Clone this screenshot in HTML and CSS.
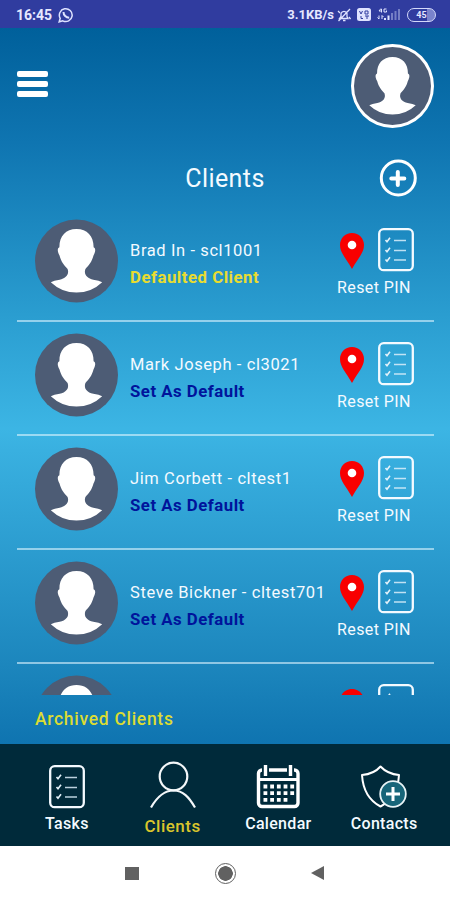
FILE: index.html
```html
<!DOCTYPE html>
<html>
	<head>
		<meta charset="utf-8" />
		<title>Clients</title>
		<link rel="stylesheet" href="styles.css">
	</head>
	<body>
		<svg class="defs" width="0" height="0">
			<symbol id="person" viewBox="0 0 84 84">
				<circle cx="42" cy="42" r="42" fill="#4d5c75"/>
				<path fill="#fff" d="M42 9.500C31 9.500 24.500 17 24.700 28C22.500 29 22.500 32 24.800 36.500C26.500 43 29.500 46.500 33 50C35 56 31 59.500 25 61Q19 62 16 63.500Q27 74 42 74Q57 74 68 63.500Q65 62 59 61C53 59.500 49 56 51 50C54.500 46.500 57.500 43 59.200 36.500C61.500 32 61.500 29 59.300 28C59.500 17 53 9.500 42 9.500Z"/>
			</symbol>
			<symbol id="pin" viewBox="0 0 24 36">
				<path fill="#f80000" d="M12 0C5 0 0 5.500 0 12C0 20 6 25 12 36C18 25 24 20 24 12C24 5.500 19 0 12 0Z"/>
				<circle cx="12" cy="12" r="4.300" fill="#fff"/>
			</symbol>
			<symbol id="tasks" viewBox="0 0 36 44">
				<rect x="1.200" y="1.200" width="33.600" height="41" rx="4.500" fill="none" stroke="#f4faff" stroke-width="2.300"/>
				<path fill="none" stroke="#e4f2fa" stroke-width="1.600" d="M7.500 12l1.500 1.800L12 9.800M7.500 22l1.500 1.800L12 19.800M7.500 31.500l1.500 1.800L12 29.300"/>
				<path fill="none" stroke="#dceefa" stroke-opacity=".85" stroke-width="1.600" d="M16 12.500h12M16 22.500h12M16 32h12"/>
			</symbol>
		</svg>

		<div class="status">
			<span class="time">16:45</span>
			<svg class="whatsapp" viewBox="0 0 16 16" width="16" height="16">
				<path fill="none" stroke="#dfe3ff" stroke-width="1.500" d="M1.200 14.800l1-3.500A6.400 6.400 0 1 1 4.800 13.800Z"/>
				<path fill="none" stroke="#dfe3ff" stroke-width="2" d="M5.500 5C5.500 8 8 10.700 11.200 10.700"/>
			</svg>
			<span class="speed">3.1KB/s</span>
			<svg class="mute" viewBox="0 0 14 14" width="14" height="14" fill="none" stroke="#dfe3ff" stroke-width="1.300">
				<path d="M2.500 10.500H11L10 8.500V5.500A3.200 3.200 0 0 0 4 5.500V8.500ZM6 12.500h2.500M13 1L1.500 13M1 3l2 2M12 9l1.500 2"/>
			</svg>
			<svg class="volte" viewBox="0 0 14 13" width="14" height="13">
				<rect width="14" height="13" rx="2.500" fill="#dfe3ff"/>
				<path fill="none" stroke="#303c9f" stroke-width="1" d="M2.500 3l1.500 3l1.500-3M8 3h3v3h-3zM4 8v2.500h2M8 8h4M10 8v3"/>
			</svg>
			<span class="signal">
				<svg viewBox="0 0 24 13" width="24" height="13">
					<path fill="none" stroke="#dfe3ff" d="M4 .5L2 3h3M4.500 1v3.500M9.500 1H7v3h2.500V2.500M2 11V7.500M.5 9.500L2 11M5 7.500V11M5 7.500l1.500 1.500"/>
					<path fill="#dfe3ff" d="M7 10h2v2H7zM10.500 7.500h2V12h-2z"/>
					<path fill="#dfe3ff" fill-opacity=".4" d="M14 5h2v7h-2zM17.500 3h2v9h-2zM21 1h2v11h-2z"/>
				</svg>
			</span>
			<span class="battery">45</span>
		</div>

		<div class="main">
			<div class="header">
				<div class="menu">
					<span></span>
					<span></span>
					<span></span>
				</div>
				<svg class="profile"><use href="#person"/></svg>
			</div>

			<div class="title">
				<h1>Clients</h1>
				<svg class="add" viewBox="0 0 38 38" width="38" height="38">
					<circle cx="19.300" cy="19" r="17" fill="none" stroke="#fff" stroke-width="3"/>
					<path fill="none" stroke="#fff" stroke-width="4" stroke-linecap="round" d="M18.800 13v13M12.300 19.500h13"/>
				</svg>
			</div>

			<div class="list">
				<div class="client">
					<svg class="avatar"><use href="#person"/></svg>
					<div class="info">
						<p class="name">Brad In - scl1001</p>
						<p class="default on">Defaulted Client</p>
					</div>
					<div class="tools">
						<div class="icons">
							<svg class="pin"><use href="#pin"/></svg>
							<svg class="tasks"><use href="#tasks"/></svg>
						</div>
						<span class="reset">Reset PIN</span>
					</div>
				</div>
				<div class="client">
					<svg class="avatar"><use href="#person"/></svg>
					<div class="info">
						<p class="name">Mark Joseph - cl3021</p>
						<p class="default">Set As Default</p>
					</div>
					<div class="tools">
						<div class="icons">
							<svg class="pin"><use href="#pin"/></svg>
							<svg class="tasks"><use href="#tasks"/></svg>
						</div>
						<span class="reset">Reset PIN</span>
					</div>
				</div>
				<div class="client">
					<svg class="avatar"><use href="#person"/></svg>
					<div class="info">
						<p class="name">Jim Corbett - cltest1</p>
						<p class="default">Set As Default</p>
					</div>
					<div class="tools">
						<div class="icons">
							<svg class="pin"><use href="#pin"/></svg>
							<svg class="tasks"><use href="#tasks"/></svg>
						</div>
						<span class="reset">Reset PIN</span>
					</div>
				</div>
				<div class="client">
					<svg class="avatar"><use href="#person"/></svg>
					<div class="info">
						<p class="name">Steve Bickner - cltest701</p>
						<p class="default">Set As Default</p>
					</div>
					<div class="tools">
						<div class="icons">
							<svg class="pin"><use href="#pin"/></svg>
							<svg class="tasks"><use href="#tasks"/></svg>
						</div>
						<span class="reset">Reset PIN</span>
					</div>
				</div>
				<div class="client">
					<svg class="avatar"><use href="#person"/></svg>
					<div class="info"></div>
					<div class="tools">
						<div class="icons">
							<svg class="pin"><use href="#pin"/></svg>
							<svg class="tasks"><use href="#tasks"/></svg>
						</div>
					</div>
				</div>
			</div>

			<a class="archived">Archived Clients</a>
		</div>

		<div class="tabs">
			<a class="tab">
				<svg width="36" height="44"><use href="#tasks"/></svg>
				<span>Tasks</span>
			</a>
			<a class="tab on">
				<svg viewBox="0 0 46 48" width="46" height="48" fill="none" stroke="#f4f8fa" stroke-width="2.200">
					<circle cx="23.500" cy="15.500" r="13.800"/>
					<path d="M1 46.500C7 36 14 29.500 23.500 29.500S39 36 45 46.500"/>
				</svg>
				<span>Clients</span>
			</a>
			<a class="tab">
				<svg viewBox="0 0 44 44" width="44" height="44">
					<rect x="2.500" y="5" width="39.500" height="36.500" rx="3.500" fill="none" stroke="#fff" stroke-width="3.400"/>
					<path fill="none" stroke="#fff" stroke-width="3" d="M2 14.500h39"/>
					<path fill="none" stroke="#002a3a" stroke-width="7" d="M9.500 2v7M34.500 2v7"/>
					<path fill="none" stroke="#fff" stroke-width="3.400" d="M9.500 0v11M34.500 0v11"/>
					<path fill="none" stroke="#fff" stroke-width="3.800" stroke-dasharray="3.800 2.900" d="M7.500 21.500h31M7.500 28.200h31M7.500 34.900h24"/>
				</svg>
				<span>Calendar</span>
			</a>
			<a class="tab">
				<svg viewBox="0 0 46 44" width="46" height="44">
					<path fill="none" stroke="#fff" stroke-width="2" stroke-linejoin="round" d="M19.500 1.500Q13 9 1 10C2 26 9 36 19.500 41.500C30 36 37 26 38 10Q26.500 9 19.500 1.500Z"/>
					<circle cx="32" cy="29" r="12.800" fill="#176579" stroke="#e8f3f6" stroke-width="1.800"/>
					<path fill="none" stroke="#fff" stroke-width="3" d="M32 22v14M25 29h14"/>
				</svg>
				<span>Contacts</span>
			</a>
		</div>

		<div class="navbar">
			<span class="square"></span>
			<span class="home"></span>
			<span class="back"></span>
		</div>
	</body>
</html>
```
FILE: styles.css
```css
*{
	margin: 0;
	padding: 0;
	box-sizing: border-box;
}
body{
	width: 450px;
	height: 900px;
	overflow: hidden;
	display: flex;
	flex-direction: column;
	font-family: Roboto, "Liberation Sans", sans-serif;
	color: #f4faff;
	background: #fff;
}
svg{
	display: block;
	flex: none;
}
.defs{
	position: absolute;
}

/* status bar */
.status{
	height: 28px;
	padding: 1px 14px 0 16px;
	display: flex;
	align-items: center;
	background: #303c9f;
	font-weight: bold;
	color: #e6e8ff;
}
.time{
	width: 42px;
	font-size: 14px;
}
.speed{
	margin-left: auto;
	font-size: 13px;
}
.mute{
	margin-left: 3px;
}
.volte{
	margin-left: 6px;
}
.signal{
	margin-left: 6px;
}
.battery{
	width: 29px;
	height: 14px;
	margin-left: 6px;
	border: 1.5px solid #d4d9fa;
	border-radius: 7px;
	font-size: 9px;
	line-height: 12px;
	text-align: center;
	background: linear-gradient(90deg, #303c9f 70%, #7a83cc 70%);
}

/* content */
.main{
	height: 716px;
	display: flex;
	flex-direction: column;
	background: linear-gradient(#00609b 0%, #0f75b1 16%, #2a9dd0 40%, #3cb5e4 56%, #39b0e0 59%, #1c86bd 89%, #0f74b0 100%);
}
.header{
	height: 116px;
	padding: 16px 16px 0 17px;
	display: flex;
	justify-content: space-between;
}
.menu{
	width: 31px;
	padding-top: 27px;
	display: flex;
	flex-direction: column;
	gap: 4px;
}
.menu span{
	height: 6px;
	border-radius: 2px;
	background: #fff;
}
.profile{
	width: 83px;
	height: 84px;
	border: 3px solid #fff;
	border-radius: 50%;
	padding: 1px;
	background: #4d5c75;
}
.title{
	height: 64px;
	padding: 15px 33px 0;
	display: grid;
	grid-template-columns: 38px 1fr 38px;
}
.title h1{
	grid-column: 2;
	padding-top: 1px;
	font-size: 25px;
	line-height: 38px;
	font-weight: normal;
	text-align: center;
	letter-spacing: 0.4px;
}
.list{
	height: 487px;
	margin: 0 16px 0 17px;
	overflow: hidden;
}
.client{
	height: 114px;
	padding: 11px 17px 0 18px;
	display: flex;
	border-bottom: 2px solid rgba(220, 243, 253, 0.6);
}
.avatar{
	width: 83px;
	height: 84px;
}
.info{
	flex: 1;
	padding: 19px 0 0 12px;
	white-space: nowrap;
}
.name{
	font-size: 16.5px;
	line-height: 26px;
	letter-spacing: 0.6px;
}
.default{
	font-size: 16.8px;
	line-height: 26px;
	font-weight: bold;
	letter-spacing: 0.5px;
	color: #00149b;
}
.default.on{
	color: #e8dc30;
}
.tools{
	width: 80px;
	padding-top: 9px;
}
.icons{
	display: flex;
	align-items: center;
	gap: 14px;
	padding-left: 3px;
}
.pin{
	width: 24px;
	height: 36px;
	margin-top: 2px;
}
.tasks{
	width: 36px;
	height: 44px;
}
.reset{
	display: block;
	padding-top: 1px;
	font-size: 16px;
	line-height: 30px;
	letter-spacing: 0.4px;
	white-space: nowrap;
}
.archived{
	padding-left: 35px;
	font-size: 17.5px;
	line-height: 48px;
	font-weight: 500;
	letter-spacing: 0.7px;
	color: #dcdc32;
}

/* bottom tabs */
.tabs{
	height: 102px;
	padding: 0 13px 0 14px;
	display: grid;
	grid-template-columns: repeat(4, 1fr);
	background: #002a3a;
}
.tab{
	padding-top: 21px;
	display: flex;
	flex-direction: column;
	align-items: center;
}
.tab span{
	margin-top: 5px;
	font-size: 16px;
	line-height: 20px;
	font-weight: 500;
	letter-spacing: 0.3px;
}
.tab.on{
	padding-top: 17px;
}
.tab.on span{
	margin-top: 7px;
	font-size: 17px;
	letter-spacing: 0.5px;
	color: #d9c52c;
}

/* android buttons */
.navbar{
	height: 54px;
	padding: 0 126px 0 125px;
	display: flex;
	align-items: center;
	justify-content: space-between;
	background: #fff;
}
.square{
	width: 14px;
	height: 13px;
	background: #616161;
}
.home{
	width: 21px;
	height: 21px;
	border: 1.5px solid #616161;
	border-radius: 50%;
	background: radial-gradient(circle, #616161 7px, #fff 7.5px);
}
.back{
	border: 7.5px solid transparent;
	border-left: 0;
	border-right: 13px solid #616161;
}
```
